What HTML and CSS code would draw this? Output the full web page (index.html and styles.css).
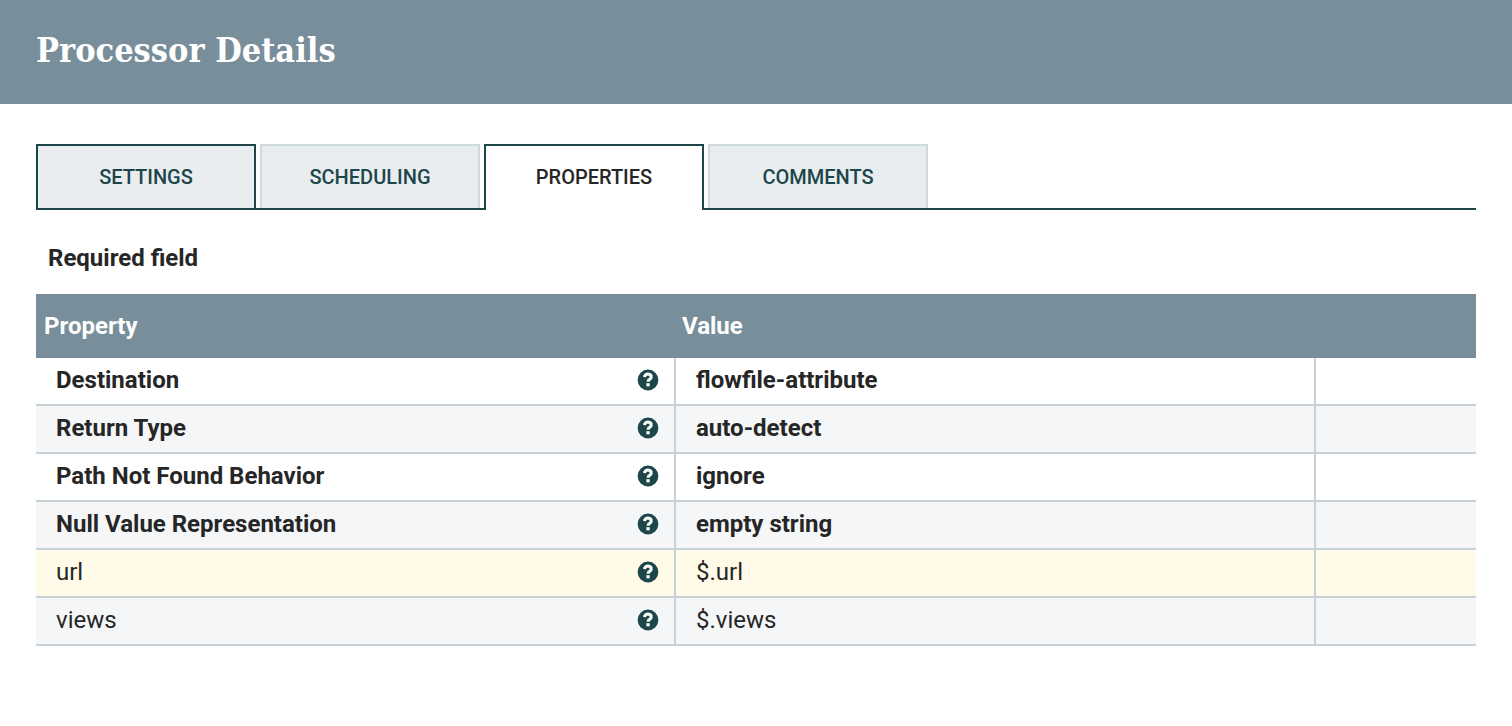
FILE: index.html
```html
<!DOCTYPE html>
<html lang="en">
<head>
<meta charset="utf-8">
<title>Processor Details</title>
<link rel="stylesheet" href="styles.css">
</head>
<body>
<svg class="sprite" aria-hidden="true">
  <symbol id="help" viewBox="0 0 22 22">
    <circle cx="11" cy="11" r="10.4" fill="#1c464a"/>
    <path d="M7.2 8Q8.5 5 11 5.1Q14.2 5.3 14.2 8Q14.2 9.5 12.6 10.4Q11 11.2 11 12.8" fill="none" stroke="#fff" stroke-width="3"/>
    <rect x="9.4" y="14.2" width="3.3" height="3.2" fill="#fff"/>
  </symbol>
</svg>
<header class="dialog-header"><h1>Processor Details</h1></header>
<main class="content">
  <div class="tabs" role="tablist">
    <button class="tab first" role="tab" type="button">SETTINGS</button>
    <button class="tab" role="tab" type="button">SCHEDULING</button>
    <button class="tab selected" role="tab" aria-selected="true" type="button">PROPERTIES</button>
    <button class="tab" role="tab" type="button">COMMENTS</button>
  </div>
  <p class="required">Required field</p>
  <table class="properties">
    <colgroup><col class="name-col"><col class="value-col"><col class="action-col"></colgroup>
    <thead><tr><th>Property</th><th>Value</th><th></th></tr></thead>
    <tbody>
      <tr class="needed"><td><div class="name">Destination<button class="help" type="button" aria-label="Help"><svg><use href="#help"/></svg></button></div></td><td>flowfile-attribute</td><td></td></tr>
      <tr class="needed"><td><div class="name">Return Type<button class="help" type="button" aria-label="Help"><svg><use href="#help"/></svg></button></div></td><td>auto-detect</td><td></td></tr>
      <tr class="needed"><td><div class="name">Path Not Found Behavior<button class="help" type="button" aria-label="Help"><svg><use href="#help"/></svg></button></div></td><td>ignore</td><td></td></tr>
      <tr class="needed"><td><div class="name">Null Value Representation<button class="help" type="button" aria-label="Help"><svg><use href="#help"/></svg></button></div></td><td>empty string</td><td></td></tr>
      <tr class="active"><td><div class="name">url<button class="help" type="button" aria-label="Help"><svg><use href="#help"/></svg></button></div></td><td>$.url</td><td></td></tr>
      <tr><td><div class="name">views<button class="help" type="button" aria-label="Help"><svg><use href="#help"/></svg></button></div></td><td>$.views</td><td></td></tr>
    </tbody>
  </table>
</main>
</body>
</html>
```
FILE: styles.css
```css
* { box-sizing: border-box; }
body { margin: 0; background: #fff; color: #262626; font-family: Roboto, sans-serif; font-size: 24px; }
.sprite { display: none; }
.dialog-header { padding: 26px 36px 30px; background: #788e9a; }
.dialog-header h1 { margin: 0; color: #fff; font-family: "Roboto Slab", "DejaVu Serif Condensed", "DejaVu Serif", serif; font-size: 34px; line-height: 48px; font-weight: 700; }
.content { padding: 40px 36px; }
.tabs { display: flex; gap: 4px; border-bottom: 2px solid #1c464a; }
.tab { width: 220px; height: 64px; padding: 0; border: 2px solid #cddbdd; border-bottom: 0; background: #e9edf0; color: #1c464a; font: 500 20px/24px Roboto, sans-serif; }
.tab.first { border-color: #1c464a; }
.tab.selected { height: 66px; margin-bottom: -2px; padding-bottom: 2px; border-color: #1c464a; background: #fff; color: #262626; }
.required { margin: 32px 12px 20px; font-weight: 700; line-height: 32px; }
.properties { width: 100%; table-layout: fixed; border-collapse: separate; border-spacing: 0; }
.name-col { width: 640px; }
.action-col { width: 160px; }
th { height: 64px; padding: 0 8px; background: #788e9a; color: #fff; text-align: left; font-weight: 700; }
th + th { padding-left: 6px; }
td { height: 48px; padding: 0 20px 2px; border-bottom: 2px solid #c7d2d7; line-height: 28px; }
td:not(:last-child) { border-right: 2px solid #c7d2d7; }
td:first-child { padding-right: 15px; }
tbody tr:nth-child(even) { background: #f4f6f8; }
tbody .active { background: #fffbe8; }
.needed { font-weight: 700; }
.name { display: flex; align-items: center; justify-content: space-between; }
.help { display: flex; padding: 0; border: 0; background: none; }
.help svg { width: 22px; height: 22px; }
```
